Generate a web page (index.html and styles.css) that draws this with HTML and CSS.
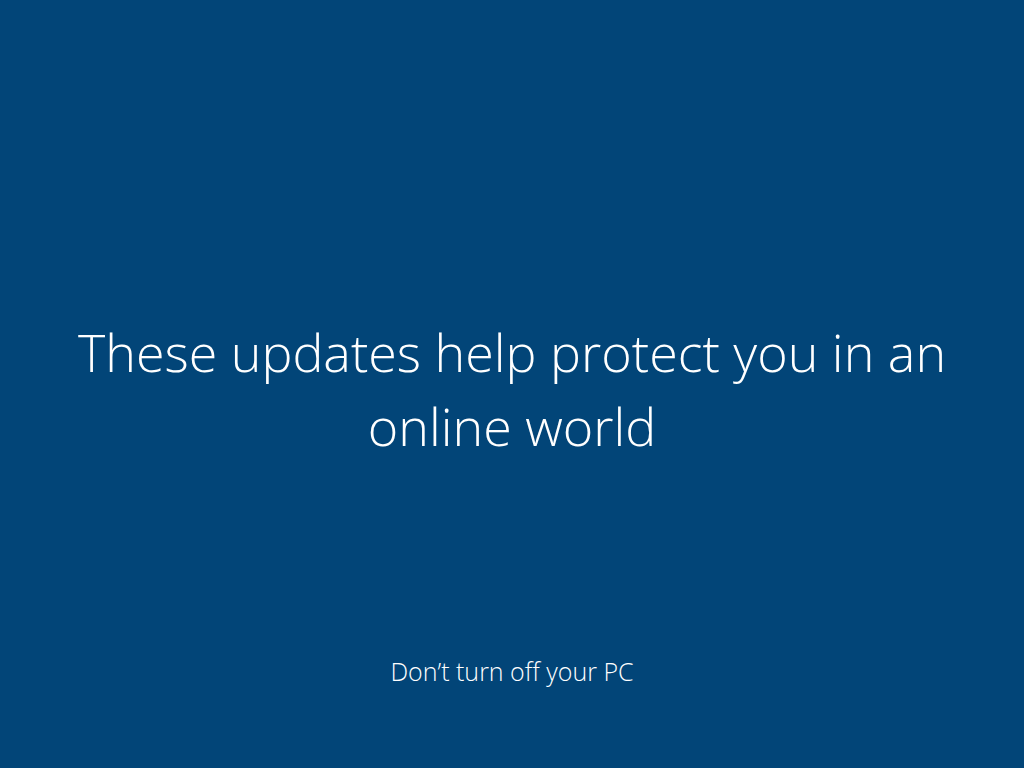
FILE: index.html
```html
<!DOCTYPE html>
<html lang="en">
<head>
    <meta charset="UTF-8">
    <meta name="viewport" content="width=device-width, initial-scale=1.0">
    <title>Working on updates</title>
    <link rel="stylesheet" href="styles.css">
</head>
<body>
    <div class="update-screen">
        <div class="headline">
            <h1>These updates help protect you in an online world</h1>
        </div>
        <p class="footer-note">Don’t turn off your PC</p>
    </div>
</body>
</html>
```

FILE: styles.css
```css
body {
    margin: 0;
    background-color: #024578;
    color: white;
    font-family: "Segoe UI Light", "Open Sans", "Noto Sans", sans-serif;
    font-weight: 300;
}
.update-screen {
    height: 100vh;
    display: flex;
    flex-direction: column;
    align-items: center;
}
.headline {
    flex: 1;
    display: flex;
    align-items: center;
    justify-content: center;
    padding-top: 124px;
}
.headline h1 {
    margin: 0;
    width: 920px;
    text-align: center;
    font-size: 52px;
    font-weight: 300;
    line-height: 74px;
}
.footer-note {
    margin: 0 0 80px;
    font-size: 25px;
    line-height: 34px;
}
```
